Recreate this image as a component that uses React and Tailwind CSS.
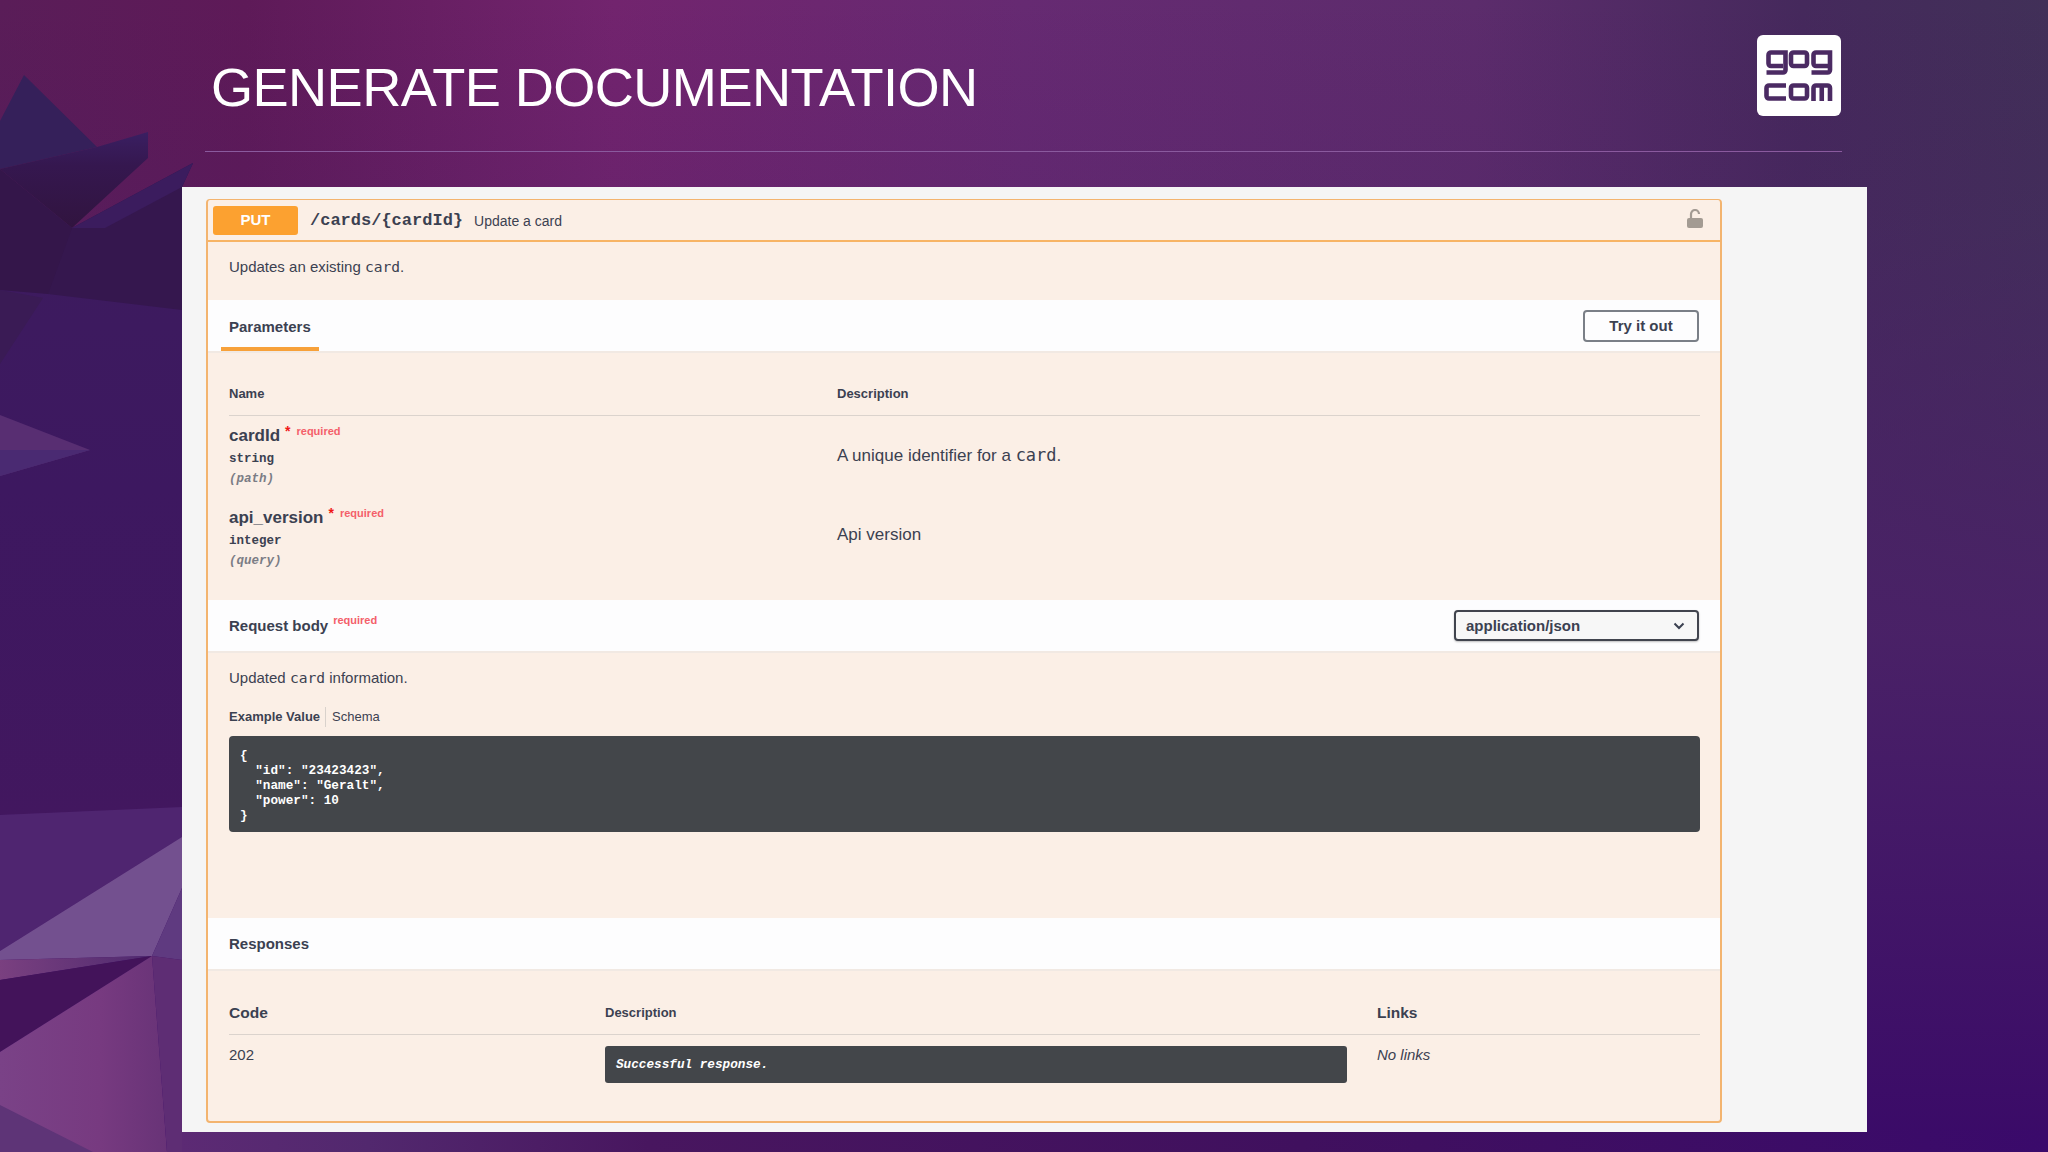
const sans = { fontFamily: '"Liberation Sans", Arial, sans-serif' };

function Backdrop() {
  return (
    <svg className="absolute inset-0" width="2048" height="1152" viewBox="0 0 2048 1152">
      <defs>
        <linearGradient id="h" x1="0" x2="1" y1="0" y2="0">
          <stop offset="0" stopColor="#5a1d58" />
          <stop offset="0.12" stopColor="#5e1a58" />
          <stop offset="0.3" stopColor="#72246e" />
          <stop offset="0.5" stopColor="#662a72" />
          <stop offset="0.72" stopColor="#5c2c6c" />
          <stop offset="0.88" stopColor="#45295c" />
          <stop offset="1" stopColor="#413058" />
        </linearGradient>
        <linearGradient id="v" x1="0" x2="0" y1="0" y2="1">
          <stop offset="0" stopColor="#46105e" stopOpacity="0" />
          <stop offset="0.2" stopColor="#4a1f68" stopOpacity="0.2" />
          <stop offset="0.55" stopColor="#4a2068" stopOpacity="0.9" />
          <stop offset="1" stopColor="#3a0a68" stopOpacity="1" />
        </linearGradient>
        <linearGradient id="low" x1="0" x2="1" y1="0" y2="0">
          <stop offset="0" stopColor="#7a4287" />
          <stop offset="0.6" stopColor="#773a80" />
          <stop offset="1" stopColor="#683377" />
        </linearGradient>
        <linearGradient id="strip" x1="0" x2="1" y1="0" y2="0">
          <stop offset="0" stopColor="#7a4080" />
          <stop offset="1" stopColor="#4f2a6f" />
        </linearGradient>
        <linearGradient id="bottom" x1="0" x2="1" y1="0" y2="0">
          <stop offset="0" stopColor="#5c2a74" />
          <stop offset="0.1" stopColor="#52286e" />
          <stop offset="0.25" stopColor="#48165f" />
          <stop offset="0.6" stopColor="#40105e" />
          <stop offset="1" stopColor="#3a0a6b" />
        </linearGradient>
        <linearGradient id="mid" x1="0" x2="0" y1="0" y2="1">
          <stop offset="0" stopColor="#3d1c5e" />
          <stop offset="0.5" stopColor="#3d1860" />
          <stop offset="1" stopColor="#42175f" />
        </linearGradient>
        <linearGradient id="shard" x1="0" x2="0" y1="0" y2="1">
          <stop offset="0" stopColor="#3a1f62" />
          <stop offset="0.35" stopColor="#35174f" />
          <stop offset="1" stopColor="#31143f" />
        </linearGradient>
      </defs>
      <rect width="2048" height="1152" fill="url(#h)" />
      <rect width="2048" height="1152" fill="url(#v)" />
      <rect x="182" y="1130" width="1866" height="22" fill="url(#bottom)" />
      <polygon points="0,170 72,228 193,163 182,187 182,808 0,815" fill="url(#mid)" />
      <polygon points="24,75 0,121 0,169 97,147" fill="#35205a" />
      <polygon points="148,132 148,158 72,228 0,169 97,147" fill="url(#shard)" />
      <polygon points="193,163 182,187 182,310 48,294 7,187 72,228" fill="#35174e" />
      <polygon points="193,163 182,187 105,228 72,228" fill="#3b1c5e" />
      <polygon points="0,169 72,228 48,294 0,290" fill="#34164a" />
      <polygon points="0,290 43,298 0,364" fill="#3a1b55" />
      <polygon points="0,415 90,450 0,476" fill="#582e72" />
      <polygon points="0,450 90,450 0,476" fill="#4a2a72" />
      <polygon points="0,815 182,807 182,837 0,951" fill="#4f2570" />
      <polygon points="182,837 0,951 0,960 152,956 182,888" fill="#73508f" />
      <polygon points="0,960 152,956 0,980" fill="url(#strip)" />
      <polygon points="0,980 152,956 0,1052" fill="#43135a" />
      <polygon points="0,1052 152,956 167,1152 0,1152" fill="url(#low)" />
      <polygon points="152,956 182,888 182,960" fill="#5f3a80" />
      <polygon points="152,956 182,960 182,1152 167,1152" fill="#5e2d74" />
      <polygon points="0,1105 93,1152 0,1152" fill="#5e3477" />
    </svg>
  );
}

function GogLogo() {
  return (
    <div className="w-[84px] h-[81px] bg-white rounded-[6px] mt-[35px] mr-[1px] shrink-0">
      <svg width="84" height="81" viewBox="0 0 84 81" fill="none" stroke="#4b2a63" strokeWidth="4.6">
        <path d="M26 31H14a2.5 2.5 0 0 1-2.5-2.5V20a2.5 2.5 0 0 1 2.5-2.5H28.5V35a2.5 2.5 0 0 1-2.5 2.5H9.5" />
        <rect x="34" y="17.5" width="16" height="13.5" rx="2.5" />
        <path d="M71 31H59a2.5 2.5 0 0 1-2.5-2.5V20a2.5 2.5 0 0 1 2.5-2.5H73V35a2.5 2.5 0 0 1-2.5 2.5H54.5" />
        <path d="M29 50.5H12a2.5 2.5 0 0 0-2.5 2.5V61a2.5 2.5 0 0 0 2.5 2.5H29" />
        <rect x="34" y="50.5" width="16" height="13" rx="2.5" />
        <path d="M56.5 66V53a2.5 2.5 0 0 1 2.5-2.5H70.5a2.5 2.5 0 0 1 2.5 2.5V66M64.75 50.5V66" />
      </svg>
    </div>
  );
}

function Lock() {
  return (
    <svg width="16" height="19" viewBox="0 0 16 19">
      <path d="M4 10V5a4 4 0 0 1 8 0" fill="none" stroke="#a39b93" strokeWidth="2.2" />
      <rect x="0" y="9" width="16" height="10" rx="2" fill="#a39b93" />
    </svg>
  );
}

function CardWord({ children, big }) {
  return <span className={big ? "text-[17px]" : "text-[14.6px]"} style={{ fontFamily: '"DejaVu Sans Mono", monospace' }}>{children}</span>;
}

function Required({ star }) {
  return (
    <span className="relative top-[-6px] text-[11px] text-[#f4606a] ml-[5px]">
      {star && <span className="text-[#f01818] font-bold text-[14px] mr-[6px] relative top-[1px]">*</span>}
      required
    </span>
  );
}

function Param({ name, type, place, desc, descTop }) {
  return (
    <div className="grid grid-cols-[608px_1fr] h-[82px]">
      <div>
        <div className="h-[26px] leading-[26px] text-[17px] font-bold text-[#3b4151] whitespace-nowrap">
          {name}
          <Required star />
        </div>
        <div className="h-[20px] leading-[20px] text-[12.5px] font-bold text-[#3b4151]" style={{ fontFamily: '"Liberation Mono", monospace' }}>{type}</div>
        <div className="h-[20px] leading-[20px] text-[12.5px] font-bold italic text-[#7b7d85]" style={{ fontFamily: '"Liberation Mono", monospace' }}>{place}</div>
      </div>
      <div className={`text-[17px] leading-[24px] text-[#3b4151] ${descTop}`}>{desc}</div>
    </div>
  );
}

function Band({ children }) {
  return (
    <div className="h-[53px] bg-[#fdfdfe] border-b-2 border-[#f1e9e3] flex items-stretch justify-between">
      {children}
    </div>
  );
}

export default function App() {
  return (
    <div className="relative w-[2048px] h-[1152px] overflow-hidden" style={sans}>
      <Backdrop />
      <div className="relative">
        <div className="ml-[205px] w-[1637px] h-[152px] border-b border-[#8a5a9e] flex justify-between">
          <h1 className="pl-[6px] pt-[53px] text-[54.2px] leading-[68px] font-normal text-white tracking-[-0.6px] whitespace-nowrap">GENERATE DOCUMENTATION</h1>
          <GogLogo />
        </div>
        <div className="ml-[182px] mt-[35px] w-[1685px] h-[945px] bg-[#f5f5f5] pt-[12px] pl-[24px]">
          <div className="w-[1516px] h-[924px] bg-[#fbefe6] border-2 border-t border-[#f3b46f] rounded-[4px] text-[#3b4151]">
            <div className="h-[42px] border-b-2 border-[#f7b465] flex items-center pl-[5px] pr-[17px]">
              <div className="w-[85px] h-[29px] rounded-[3px] bg-[#fca130] text-white font-bold text-[15px] flex items-center justify-center">PUT</div>
              <span className="ml-[12px] pt-[2px] text-[17px] font-bold" style={{ fontFamily: '"Liberation Mono", monospace' }}>/cards/{"{cardId}"}</span>
              <span className="ml-[11px] pt-[2px] text-[14px]">Update a card</span>
              <span className="ml-auto mb-[3px]"><Lock /></span>
            </div>
            <div className="h-[58px] pt-[15px] pl-[21px] text-[15px] leading-[20px]">Updates an existing <CardWord>card</CardWord>.</div>
            <Band>
              <div className="ml-[13px] w-[98px] border-b-4 border-[#f7a13a] pl-[8px] pt-[8px] flex items-center text-[15px] font-bold">Parameters</div>
              <div className="self-center mr-[21px] w-[116px] h-[32px] border-2 border-[#7a7f87] rounded-[4px] flex items-center justify-center pt-[2px] text-[15px] font-bold">Try it out</div>
            </Band>
            <div className="h-[247px] pl-[21px] pr-[20px]">
              <div className="grid grid-cols-[608px_1fr] h-[63px] border-b border-[#dbd3cd] items-end pb-[13px] text-[13px] font-bold leading-[16px]">
                <span>Name</span>
                <span>Description</span>
              </div>
              <div className="pt-[7px]">
                <Param name="cardId" type="string" place="(path)" desc={<>A unique identifier for a <CardWord big>card</CardWord>.</>} descTop="pt-[20px]" />
                <Param name="api_version" type="integer" place="(query)" desc="Api version" descTop="pt-[18px]" />
              </div>
            </div>
            <Band>
              <div className="pl-[21px] pt-[2px] flex items-center text-[15px] font-bold">
                Request body
                <Required />
              </div>
              <div className="self-center mr-[21px] w-[245px] h-[31px] border-2 border-[#41444e] rounded-[4px] bg-[#f7f7f7] shadow-[0_1px_2px_rgba(0,0,0,0.25)] flex items-center justify-between pl-[10px] pr-[12px] pt-[1px] text-[15px] font-bold">
                application/json
                <svg width="12" height="8" viewBox="0 0 12 8" fill="none" stroke="#3b4151" strokeWidth="2"><path d="M1.5 1.5L6 6l4.5-4.5" /></svg>
              </div>
            </Band>
            <div className="h-[265px] pl-[21px] pr-[20px] pt-[15px]">
              <div className="text-[15px] leading-[20px]">Updated <CardWord>card</CardWord> information.</div>
              <div className="mt-[19px] h-[20px] flex items-center text-[13px]">
                <span className="font-bold pr-[5px] border-r border-[#d9d2cc]">Example Value</span>
                <span className="pl-[6px]">Schema</span>
              </div>
              <pre className="mt-[9px] h-[96px] bg-[#43464a] rounded-[4px] pt-[12px] pl-[11px] text-white text-[12.7px] leading-[15px] font-bold" style={{ fontFamily: '"Liberation Mono", monospace' }}>{`{
  "id": "23423423",
  "name": "Geralt",
  "power": 10
}`}</pre>
            </div>
            <Band>
              <div className="pl-[21px] pt-[2px] flex items-center text-[15px] font-bold">Responses</div>
            </Band>
            <div className="pl-[21px] pr-[20px]">
              <div className="grid grid-cols-[376px_772px_1fr] h-[64px] border-b border-[#dbd3cd] items-end pb-[11px] font-bold leading-[20px]">
                <span className="text-[15.5px]">Code</span>
                <span className="text-[13px]">Description</span>
                <span className="text-[15.5px]">Links</span>
              </div>
              <div className="grid grid-cols-[376px_772px_1fr] pt-[10px] text-[15px] leading-[20px]">
                <span>202</span>
                <div className="w-[742px] h-[37px] mt-[1px] bg-[#43464a] rounded-[3px] pl-[11px] flex items-center text-white text-[12.7px] font-bold italic" style={{ fontFamily: '"Liberation Mono", monospace' }}>Successful response.</div>
                <span className="italic">No links</span>
              </div>
            </div>
          </div>
        </div>
      </div>
    </div>
  );
}
